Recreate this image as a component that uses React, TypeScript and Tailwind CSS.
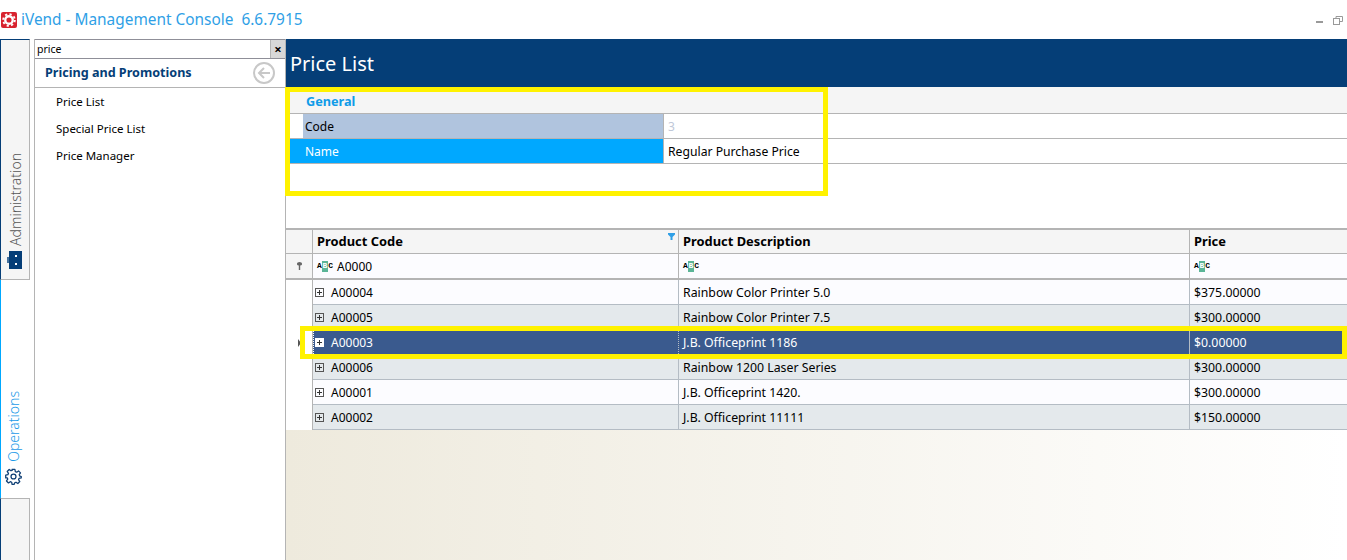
const font = "font-['Noto_Sans','DejaVu_Sans',sans-serif]";

const rows = [
  { code: "A00004", desc: "Rainbow Color Printer 5.0", price: "$375.00000", alt: false },
  { code: "A00005", desc: "Rainbow Color Printer 7.5", price: "$300.00000", alt: true },
  { code: "A00003", desc: "J.B. Officeprint 1186", price: "$0.00000", selected: true },
  { code: "A00006", desc: "Rainbow 1200 Laser Series", price: "$300.00000", alt: true },
  { code: "A00001", desc: "J.B. Officeprint 1420.", price: "$300.00000", alt: false },
  { code: "A00002", desc: "J.B. Officeprint 11111", price: "$150.00000", alt: true },
];

function AbcIcon() {
  return (
    <span className="inline-flex h-[11px] w-[16px] items-center justify-between font-['Liberation_Mono',monospace] text-[8px] font-bold leading-none text-black">
      <span>A</span>
      <span className="flex h-[11px] w-[7px] items-center justify-center bg-[#5bb597] text-white">B</span>
      <span>C</span>
    </span>
  );
}

function Expander({ light }: { light?: boolean }) {
  return (
    <span className={`relative block h-[9px] w-[9px] border ${light ? "border-white bg-white" : "border-[#555555]"}`}>
      <span className="absolute left-[1px] top-[3px] h-px w-[5px] bg-[#333333]" />
      <span className="absolute left-[3px] top-[1px] h-[5px] w-px bg-[#333333]" />
    </span>
  );
}

function Gear({ className }: { className?: string }) {
  return (
    <svg className={className} width="17" height="17" viewBox="0 0 24 24" fill="none" stroke="currentColor" strokeWidth="1.8" strokeLinejoin="round">
      <path d="M10 2h4l.6 3.1 1.9.8 2.6-1.8 2.8 2.8-1.8 2.6.8 1.9L23 12l-.1 2-3 .6-.8 1.9 1.8 2.6-2.8 2.8-2.6-1.8-1.9.8L13 23h-3l-.6-2.9-1.9-.8-2.6 1.8-2.8-2.8 1.8-2.6-.8-1.9L1 14v-4l3.1-.6.8-1.9-1.8-2.6 2.8-2.8 2.6 1.8 1.9-.8z" />
      <circle cx="12" cy="12" r="3.5" />
    </svg>
  );
}

export default function App() {
  return (
    <div className={`flex h-[560px] w-[1347px] flex-col overflow-hidden bg-white text-[12px] text-black ${font}`}>
      {/* Title bar */}
      <div className="flex h-[39px] shrink-0 items-center pl-[1px] pr-[4px]">
        <span className="flex h-[16px] w-[16px] items-center justify-center rounded-[2px] bg-[#d8232f]">
          <svg width="14" height="14" viewBox="0 0 12 12">
            <circle cx="6" cy="6" r="4.2" fill="white" />
            <circle cx="6" cy="6" r="5" fill="none" stroke="white" strokeWidth="1.6" strokeDasharray="1.9 2" />
            <circle cx="6" cy="6" r="2.200" fill="#d8232f" />
          </svg>
        </span>
        <span className="ml-[4px] whitespace-pre text-[15.4px] text-[#2f9fe6]">iVend - Management Console  6.6.7915</span>
        <div className="ml-auto flex items-center gap-[10px] pt-[1px]">
          <span className="mt-[3px] h-[2px] w-[7px] bg-[#999999]" />
          <svg width="10" height="9" viewBox="0 0 10 9" fill="none" stroke="#999999">
            <path d="M3 2.500V.5h6.500v5H6.500" />
            <rect x="0.5" y="2.500" width="6" height="6" />
          </svg>
        </div>
      </div>

      <div className="flex min-h-0 flex-1">
        {/* Vertical tabs */}
        <div className="flex w-[34px] shrink-0 flex-col">
          <div className="flex h-[241px] w-[30px] shrink-0 flex-col justify-end border-b border-l border-r border-t border-[#b4b4b4] border-l-[#053e77] border-t-[#053e77] bg-[#f5f5f5] pb-[10px]">
            <div className="flex flex-col items-center gap-[5px]">
              <span className="rotate-180 text-[14px] font-light text-[#555555] [writing-mode:vertical-rl]">Administration</span>
              <span className="relative h-[18px] w-[13px] bg-[#053e77]">
                <span className="absolute left-[6px] top-[4px] h-[2px] w-[2px] bg-white" />
                <span className="absolute left-[6px] top-[12px] h-[2px] w-[2px] bg-white" />
                <span className="absolute -left-[2px] top-[6px] h-[6px] w-[2px] bg-[#44719e]" />
              </span>
            </div>
          </div>
          <div className="flex h-[218px] w-[26px] shrink-0 flex-col justify-end border-l border-l-[#00a8ff] pb-[13px]">
            <div className="flex flex-col items-center gap-[6px]">
              <span className="rotate-180 text-[14px] font-light text-[#1a9ae8] [writing-mode:vertical-rl]">Operations</span>
              <Gear className="text-[#0f3f75]" />
            </div>
          </div>
          <div className="w-[30px] flex-1 border-l border-r border-t border-[#b4b4b4] border-l-[#053e77] bg-[#f5f5f5]" />
        </div>

        {/* Navigation panel */}
        <div className="flex w-[252px] shrink-0 flex-col border-l border-r border-[#b4b4b4]">
          <div className="flex h-[20px] shrink-0 items-center border-y border-[#8f8f98] pl-[2px]">
            <span className="flex-1 pt-px text-[10.5px]">price</span>
            <span className="flex h-[18px] w-[15px] items-center justify-center border-l border-[#b4b4b4] bg-[#d8d8d8] text-[13px] font-bold leading-none">×</span>
          </div>
          <div className="flex h-[29px] shrink-0 items-center justify-between border-b border-[#b4b4b4] pl-[10px] pr-[10px]">
            <span className="text-[12.6px] font-bold text-[#053e77]">Pricing and Promotions</span>
            <svg width="22" height="22" viewBox="0 0 22 22" fill="none" stroke="#c8c8c8" strokeWidth="2">
              <circle cx="11" cy="11" r="10" />
              <path d="M17 11H6M11 6l-5 5 5 5" />
            </svg>
          </div>
          <div className="flex flex-col pl-[21px] text-[11.5px]">
            <span className="flex h-[27px] items-center">Price List</span>
            <span className="flex h-[27px] items-center">Special Price List</span>
            <span className="flex h-[27px] items-center">Price Manager</span>
          </div>
        </div>

        {/* Main panel */}
        <div className="flex min-w-0 flex-1 flex-col">
          <div className="flex h-[48px] shrink-0 items-center bg-[#053e77] pl-[4px] pt-px">
            <span className="text-[20px] text-white">Price List</span>
          </div>

          {/* General form */}
          <div className="relative h-[143px] shrink-0 border-b-2 border-[#b4b4b4]">
            <div className="flex h-[27px] items-center border-b border-[#b4b4b4] bg-[#f5f5f5] pl-[20px] pt-[3px]">
              <span className="text-[12.7px] font-bold text-[#0f9be8]">General</span>
            </div>
            <div className="flex h-[25px] border-b border-[#b4b4b4]">
              <div className="ml-[17px] flex w-[361px] items-center border-r border-[#b4b4b4] bg-[#b0c4de] pl-[2px] pt-px">Code</div>
              <div className="flex items-center pl-[4px] pt-px text-[#c0c8d8]">3</div>
            </div>
            <div className="flex h-[25px] border-b border-[#b4b4b4]">
              <div className="ml-[4px] flex w-[374px] items-center border-r border-[#b4b4b4] bg-[#00a8ff] pl-[15px] pt-px text-white">Name</div>
              <div className="flex items-center pl-[4px] pt-[2px] text-[12.2px]">Regular Purchase Price</div>
            </div>
            {/* highlight from the annotated screenshot */}
            <div className="pointer-events-none absolute -left-px top-0 h-[109px] w-[543px] border-[5px] border-[#fff200]" />
          </div>

          {/* Grid */}
          <div className="relative flex shrink-0 flex-col">
            <div className="flex h-[24px] border-b border-[#b4b4b4] bg-[#f5f5f5] text-[12.9px] font-bold">
              <div className="w-[27px] shrink-0 border-r border-[#b4b4b4]" />
              <div className="relative flex w-[366px] shrink-0 items-center border-r border-[#b4b4b4] pl-[4px]">
                Product Code
                <svg className="absolute right-[3px] top-[3px]" width="7" height="7" viewBox="0 0 7 7" fill="#2f9fe6">
                  <path d="M0 0h7v1.500L4.500 4v3h-2V4L0 1.500z" />
                </svg>
              </div>
              <div className="flex w-[511px] shrink-0 items-center border-r border-[#b4b4b4] pl-[4px]">Product Description</div>
              <div className="flex flex-1 items-center pl-[4px]">Price</div>
            </div>
            <div className="flex h-[26px] border-b-2 border-[#b4b4b4]">
              <div className="flex w-[27px] shrink-0 items-center justify-center border-r border-[#b4b4b4] bg-[#f5f5f5]">
                <svg width="5" height="8" viewBox="0 0 5 8" fill="#666666">
                  <path d="M0 1.500a2.500 1.500 0 0 1 5 0v1a2.500 1.500 0 0 1-1.800 1V8H1.800V3.500A2.500 1.500 0 0 1 0 2.500z" />
                </svg>
              </div>
              <div className="flex w-[366px] shrink-0 items-center gap-[4px] border-r border-[#b4b4b4] bg-[#fcfcff] pl-[4px]">
                <AbcIcon />
                <span className="pt-px">A0000</span>
              </div>
              <div className="flex w-[511px] shrink-0 items-center border-r border-[#b4b4b4] bg-[#fcfcff] pl-[4px]">
                <AbcIcon />
              </div>
              <div className="flex flex-1 items-center bg-[#fcfcff] pl-[4px]">
                <AbcIcon />
              </div>
            </div>
            {rows.map((row) => (
              <div key={row.code} className="flex h-[25px]">
                <div className="relative w-[27px] shrink-0 border-r border-[#b4b4b4] bg-white">
                  {row.selected && (
                    <span className="absolute left-[12px] top-[9px] h-0 w-0 border-y-[4px] border-l-[3px] border-y-transparent border-l-[#555555]" />
                  )}
                </div>
                <div
                  className={`flex min-w-0 flex-1 border-b border-[#b4bcc4] ${
                    row.selected ? "bg-[#3a5a8e] text-white" : row.alt ? "bg-[#e4e9ec]" : "bg-[#fcfcff]"
                  }`}
                >
                  <div
                    className={`flex w-[366px] shrink-0 items-center gap-[7px] border-r border-[#b4bcc4] ${
                      row.selected ? "border-l border-dotted border-l-white pl-[1px]" : "pl-[2px]"
                    }`}
                  >
                    <Expander light={row.selected} />
                    <span className="pt-px">{row.code}</span>
                  </div>
                  <div className="flex w-[511px] shrink-0 items-center border-r border-[#b4bcc4] pl-[4px] pt-[2px] text-[12.3px]">{row.desc}</div>
                  <div className="flex flex-1 items-center pl-[4px] pt-[2px] text-[12.3px]">{row.price}</div>
                </div>
              </div>
            ))}
            <div className="pointer-events-none absolute left-[14px] top-[96px] h-[33px] w-[1047px] border-[5px] border-[#fff200]" />
          </div>

          <div className="min-h-0 flex-1 bg-linear-to-r from-[#eeeadd] to-white" />
        </div>
      </div>
    </div>
  );
}
